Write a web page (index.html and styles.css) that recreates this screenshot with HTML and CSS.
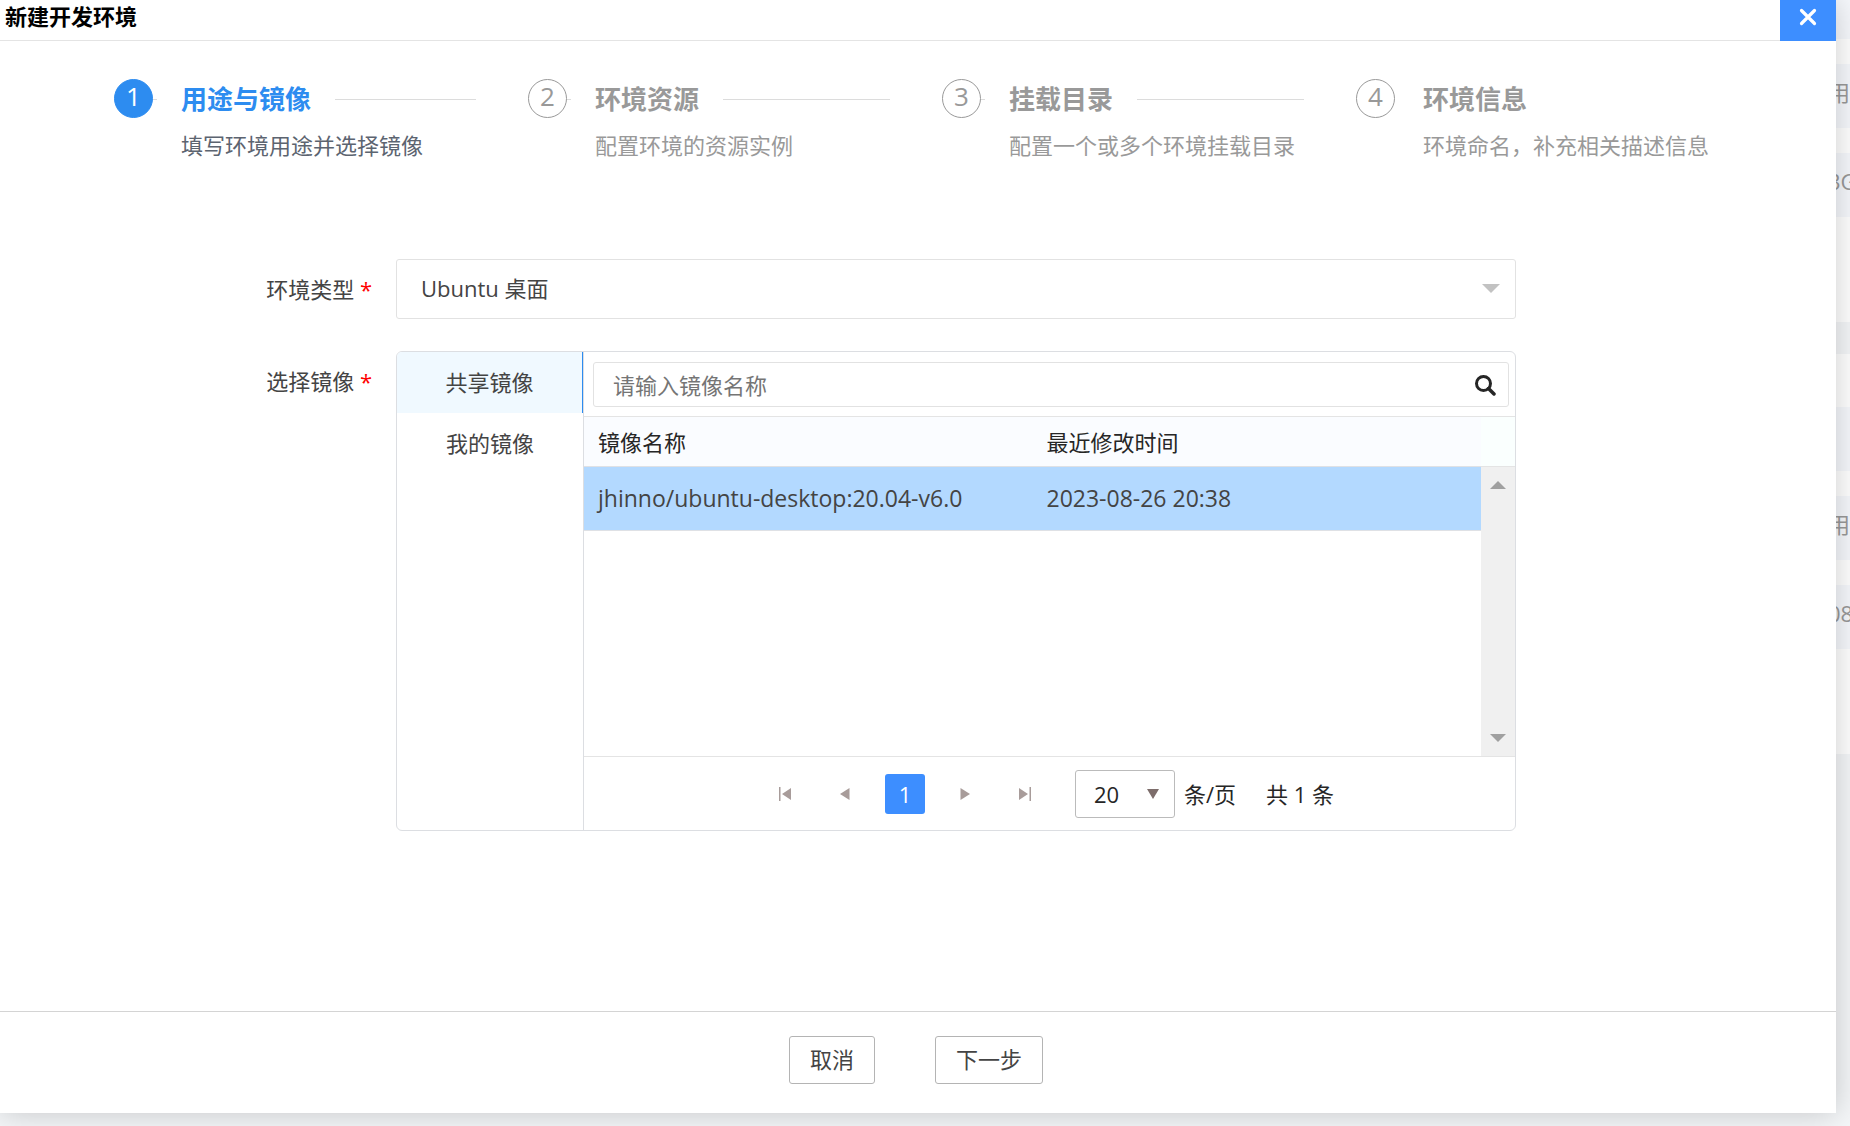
FILE: index.html
```html
<!DOCTYPE html>
<html lang="zh-CN">
<head>
<meta charset="utf-8">
<title>新建开发环境</title>
<link rel="stylesheet" href="styles.css">
</head>
<body>
<div class="backdrop" aria-hidden="true">
  <div class="card card-first">
    <div class="card-row"></div>
    <div class="card-row">用</div>
    <div class="card-row">3G</div>
  </div>
  <div class="card">
    <div class="card-row"></div>
    <div class="card-row">用</div>
    <div class="card-row">08</div>
  </div>
</div>

<main class="dialog" role="dialog" aria-labelledby="dialog-title">
  <header class="dialog-header">
    <h1 class="dialog-title" id="dialog-title">新建开发环境</h1>
    <button class="close" type="button" aria-label="关闭">
      <svg width="18" height="18" viewBox="0 0 18 18"><path d="M2.500 2.500L15.500 15.500M15.500 2.500L2.500 15.500" stroke="#fff" stroke-width="3.200" stroke-linecap="round"/></svg>
    </button>
  </header>

  <div class="dialog-body">
    <ol class="steps">
      <li class="step step-active">
        <span class="step-number">1</span>
        <div class="step-text"><h2 class="step-title">用途与镜像</h2><p class="step-note">填写环境用途并选择镜像</p></div>
      </li>
      <li class="step">
        <span class="step-number">2</span>
        <div class="step-text"><h2 class="step-title">环境资源</h2><p class="step-note">配置环境的资源实例</p></div>
      </li>
      <li class="step">
        <span class="step-number">3</span>
        <div class="step-text"><h2 class="step-title">挂载目录</h2><p class="step-note">配置一个或多个环境挂载目录</p></div>
      </li>
      <li class="step step-last">
        <span class="step-number">4</span>
        <div class="step-text"><h2 class="step-title">环境信息</h2><p class="step-note">环境命名，补充相关描述信息</p></div>
      </li>
    </ol>

    <form class="form" id="env-form">
      <label class="label" for="env-type">环境类型 <span class="required">*</span></label>
      <div class="select-box">
        <select class="select" id="env-type"><option>Ubuntu 桌面</option></select>
        <svg class="select-arrow" width="18" height="9" viewBox="0 0 18 9"><path d="M0 0H18L9 9Z" fill="#c2c2c2"/></svg>
      </div>

      <label class="label" for="image-name">选择镜像 <span class="required">*</span></label>
      <div class="picker">
        <div class="tabs" role="tablist">
          <button class="tab tab-active" type="button" role="tab" aria-selected="true">共享镜像</button>
          <button class="tab" type="button" role="tab" aria-selected="false">我的镜像</button>
        </div>
        <div class="panel">
          <div class="search-row">
            <div class="search">
              <input class="search-input" id="image-name" type="text" placeholder="请输入镜像名称">
              <button class="search-button" type="button" aria-label="搜索">
                <svg width="22" height="22" viewBox="0 0 22 22" fill="none" stroke="#262626"><circle cx="9.500" cy="9.500" r="7" stroke-width="3"/><path d="M14.500 14.500L20 20" stroke-width="3.500" stroke-linecap="round"/></svg>
              </button>
            </div>
          </div>
          <div class="grid-area">
            <div class="table-area">
              <table class="table">
                <thead><tr><th scope="col">镜像名称</th><th scope="col">最近修改时间</th></tr></thead>
                <tbody><tr><td>jhinno/ubuntu-desktop:20.04-v6.0</td><td>2023-08-26 20:38</td></tr></tbody>
              </table>
            </div>
            <div class="scroll">
              <div class="scroll-corner"></div>
              <div class="scroll-track">
                <svg width="16" height="8" viewBox="0 0 16 8"><path d="M0 8H16L8 0Z" fill="#a0a0a0"/></svg>
                <svg width="16" height="8" viewBox="0 0 16 8"><path d="M0 0H16L8 8Z" fill="#a0a0a0"/></svg>
              </div>
            </div>
          </div>
          <div class="pager">
            <div class="pages">
              <button class="page" type="button" aria-label="首页"><svg width="14" height="14" viewBox="0 0 14 14" fill="#a89c9a"><path d="M1 0H2.500V14H1ZM13 1V13L4 7Z"/></svg></button>
              <button class="page" type="button" aria-label="上一页"><svg width="14" height="14" viewBox="0 0 14 14" fill="#a89c9a"><path d="M11.500 1V13L2 7Z"/></svg></button>
              <button class="page page-current" type="button">1</button>
              <button class="page" type="button" aria-label="下一页"><svg width="14" height="14" viewBox="0 0 14 14" fill="#a89c9a"><path d="M2.500 1V13L12 7Z"/></svg></button>
              <button class="page" type="button" aria-label="末页"><svg width="14" height="14" viewBox="0 0 14 14" fill="#a89c9a"><path d="M13 0H11.500V14H13ZM1 1V13L10 7Z"/></svg></button>
            </div>
            <div class="size">
              <div class="size-box">
                <select class="size-select" id="page-size"><option>20</option></select>
                <svg class="size-arrow" width="12" height="10" viewBox="0 0 12 10"><path d="M0 0H12L6 10Z" fill="#7d6d6b"/></svg>
              </div>
              <label for="page-size">条/页</label>
            </div>
            <span>共 1 条</span>
          </div>
        </div>
      </div>
    </form>
  </div>

  <footer class="dialog-footer">
    <button class="button" type="button">取消</button>
    <button class="button" type="submit" form="env-form">下一步</button>
  </footer>
</main>
</body>
</html>
```
FILE: styles.css
```css
* { box-sizing: border-box; }

body {
  margin: 0;
  min-height: 100vh;
  position: relative;
  overflow-x: hidden;
  background: #f4f6f8;
  color: #444;
  font-family: "Open Sans", "Noto Sans CJK SC", sans-serif;
  font-size: 22px;
  line-height: 32px;
}

button, input, select { font: inherit; color: inherit; margin: 0; }
button { cursor: pointer; }
h1, h2, p, ol { margin: 0; padding: 0; }
svg { display: block; }

/* cards of the page underneath the dialog */
.backdrop {
  position: absolute;
  inset: 0;
  overflow: hidden;
  display: flex;
  flex-direction: column;
  gap: 32px;
}
.card {
  flex: none;
  height: 400px;
  padding-top: 53px;
  display: flex;
  flex-direction: column;
  gap: 25px;
  background: #fff;
}
.card-first { margin-top: -78px; }
.card-row {
  height: 64px;
  padding-left: calc(100% - 22px);
  background: #f6f8fc;
  color: #999;
  line-height: 56px;
  white-space: nowrap;
}

.dialog {
  position: relative;
  min-height: calc(100vh - 13px);
  margin-right: 14px;
  display: flex;
  flex-direction: column;
  background: #fff;
  box-shadow: 0 0 30px rgba(0, 0, 0, .2);
}
.dialog-header {
  display: flex;
  justify-content: space-between;
  height: 41px;
  padding-left: 5px;
  border-bottom: 1px solid #e4e4e4;
}
.dialog-title { color: #000; font-size: 22px; line-height: 32px; }
.close {
  display: flex;
  justify-content: center;
  width: 56px;
  height: 41px;
  padding: 8px 0 0;
  border: 0;
  background: #3d8eff;
}
.dialog-body { flex: 1; }

.steps {
  display: grid;
  grid-template-columns: repeat(4, 1fr);
  padding: 38px 66px 0 114px;
  list-style: none;
}
.step { display: flex; color: #999; }
.step-number {
  flex: none;
  width: 39px;
  height: 39px;
  border: 1px solid #999;
  border-radius: 50%;
  font-size: 26px;
  line-height: 32px;
  text-align: center;
}
.step-text { flex: 1; display: flex; flex-direction: column; gap: 10px; }
.step-title {
  display: flex;
  align-items: center;
  gap: 24px;
  padding-right: 52px;
  font-size: 26px;
  line-height: 40px;
}
.step-title::before { content: ""; width: 4px; height: 1px; background: #dcdcdc; }
.step-title::after { content: ""; flex: 1; height: 1px; background: #dcdcdc; }
.step-last .step-title::before { background: none; }
.step-last .step-title::after { content: none; }
.step-note { padding-left: 28px; white-space: nowrap; }
.step-active { color: #5c6470; }
.step-active .step-number { border-color: #2d8cf0; background: #2d8cf0; color: #fff; }
.step-active .step-title { color: #2d8cf0; }

.form {
  display: grid;
  grid-template-columns: 372px minmax(0, 1fr);
  gap: 32px 24px;
  padding: 98px 320px 32px 0;
}
.label { padding-top: 14px; text-align: right; }
.required { color: #f00; }

.select-box { display: grid; align-items: center; }
.select-box > *, .size-box > * { grid-area: 1 / 1; }
.select {
  width: 100%;
  height: 60px;
  padding: 0 24px 2px;
  appearance: none;
  border: 1px solid #e2e2e2;
  border-radius: 3px;
  background: #fff;
}
.select-arrow { justify-self: end; margin: 0 16px 2px 0; pointer-events: none; }

.picker {
  display: flex;
  overflow: hidden;
  border: 1px solid #dcdee2;
  border-radius: 6px;
}
.tabs { width: 187px; border-right: 1px solid #dcdee2; }
.tab {
  display: block;
  width: 100%;
  height: 61px;
  padding: 0 0 2px;
  border: 0;
  background: none;
}
.tab-active { border-right: 1px solid #2d8cf0; background: #f0f9ff; }
.panel { flex: 1; min-width: 0; }

.search-row { padding: 10px 6px 9px 9px; }
.search {
  display: flex;
  height: 45px;
  border: 1px solid #e2e2e2;
  border-radius: 3px;
}
.search-input { flex: 1; padding: 0 19px; border: 0; outline: 0; background: none; }
.search-input::placeholder { color: #757575; opacity: 1; }
.search-button { display: grid; place-items: center; width: 46px; padding: 0; border: 0; background: none; }

.grid-area { display: flex; min-height: 341px; border: solid #e4e4e4; border-width: 1px 0; }
.table-area { flex: 1; }
.table { width: 100%; table-layout: fixed; border-collapse: separate; border-spacing: 0; }
.table th, .table td { padding: 0 0 0 14px; border-bottom: 1px solid #dfe1e5; text-align: left; white-space: nowrap; }
.table th { height: 50px; background: #fafcff; color: #262626; font-weight: 400; }
.table td { height: 64px; padding-bottom: 2px; background: #b3d9ff; font-size: 23px; }
.scroll { display: flex; flex-direction: column; width: 34px; }
.scroll-corner { height: 50px; border-bottom: 1px solid #e4e4e4; background: #fafffe; }
.scroll-track {
  flex: 1;
  display: flex;
  flex-direction: column;
  align-items: center;
  justify-content: space-between;
  padding: 14px 0;
  background: #f0f0f0;
}

.pager {
  display: flex;
  align-items: center;
  justify-content: center;
  gap: 30px;
  height: 73px;
  color: #262626;
}
.pages { display: flex; gap: 20px; }
.page { display: grid; place-items: center; width: 40px; height: 40px; padding: 0; border: 0; border-radius: 3px; background: none; }
.page-current { background: #3d8eff; color: #fff; }
.size { display: flex; align-items: center; gap: 9px; }
.size-box { display: grid; align-items: center; }
.size-select {
  width: 100px;
  height: 48px;
  padding: 0 0 0 18px;
  appearance: none;
  border: 1px solid #bbb;
  border-radius: 3px;
  background: #fff;
}
.size-arrow { justify-self: end; margin-right: 16px; pointer-events: none; }

.dialog-footer {
  display: flex;
  justify-content: center;
  gap: 60px;
  height: 102px;
  padding: 24px 4px 0 0;
  border-top: 1px solid #d4d4d4;
}
.button {
  height: 48px;
  padding: 0 20px 2px;
  border: 1px solid #b4b4b4;
  border-radius: 3px;
  background: #fff;
}
```
